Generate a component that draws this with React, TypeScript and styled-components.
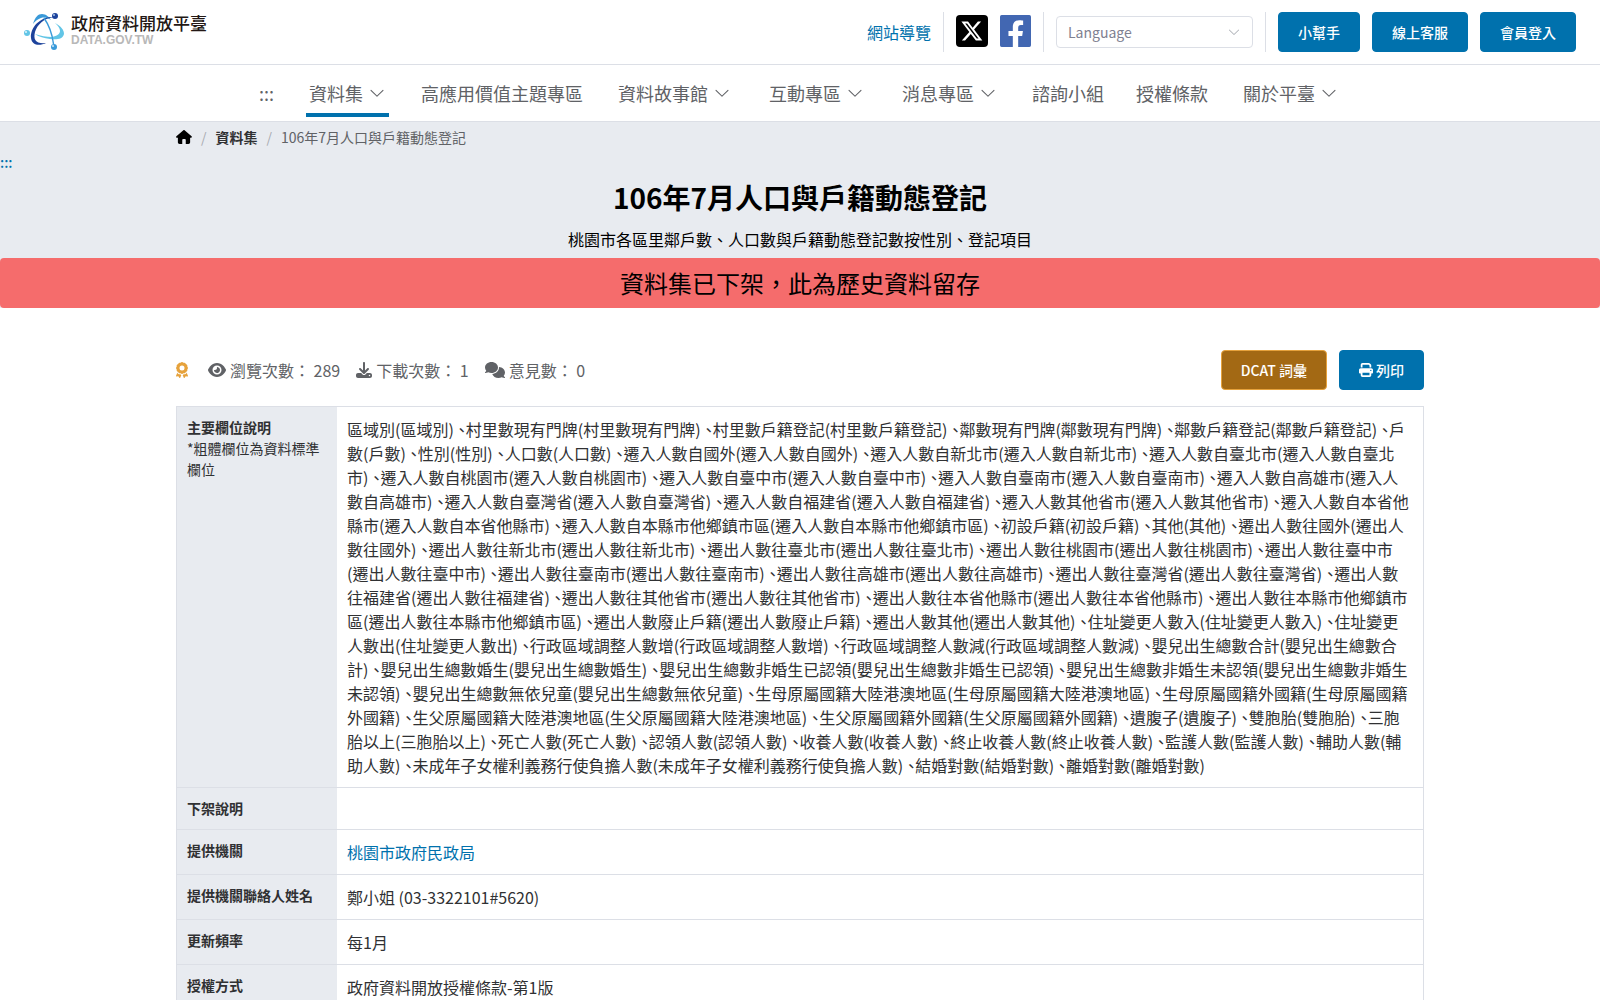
import React from "react";
import styled, { createGlobalStyle } from "styled-components";
import { FaAward, FaComments, FaDownload, FaEye, FaPrint } from "react-icons/fa6";

const color = {
  primary: "#0071ad",
  border: "#dcdfe6",
  panel: "#e8ebf0",
  text: "#303133",
  muted: "#606266",
  gold: "#a36914",
  amber: "#e6a23c",
  danger: "#f56c6c",
};

const GlobalStyle = createGlobalStyle`
  *, *::before, *::after { box-sizing: border-box; }
  body {
    margin: 0;
    background: #fff;
    color: ${color.text};
    font-family: "Noto Sans CJK TC", sans-serif;
    font-size: 16px;
    line-height: 24px;
  }
  a { color: ${color.primary}; text-decoration: none; }
  button, select { font-family: inherit; }
`;

const TopBar = styled.header`
  display: flex;
  align-items: center;
  justify-content: space-between;
  padding: 12px 24px;
  border-bottom: 1px solid ${color.border};
`;

const Brand = styled.a`
  display: flex;
  align-items: center;
  gap: 7px;
`;

const BrandText = styled.span`
  display: flex;
  flex-direction: column;
  padding-bottom: 4px;
`;

const BrandName = styled.span`
  color: #231815;
  font-size: 17px;
  font-weight: 500;
  line-height: 20px;
`;

const BrandDomain = styled.span`
  color: #b8b8b8;
  font-family: "Liberation Sans", sans-serif;
  font-size: 12px;
  font-weight: 700;
  line-height: 14px;
`;

const Tools = styled.div`
  display: flex;
  align-items: center;
  gap: 12px;
`;

const Divider = styled.span`
  width: 1px;
  height: 40px;
  background: ${color.border};
`;

const IconLink = styled.a`
  display: flex;
  padding-bottom: 2px;
`;

const SelectBox = styled.label`
  position: relative;
  display: flex;
  align-items: center;
`;

const Select = styled.select`
  appearance: none;
  width: 197px;
  height: 32px;
  padding: 0 32px 0 11px;
  border: 1px solid ${color.border};
  border-radius: 4px;
  background: #fff;
  color: #7f8191;
  font-size: 14px;
`;

const SelectArrow = styled.span`
  position: absolute;
  right: 12px;
  display: flex;
  color: #a8abb2;
  pointer-events: none;
`;

const Button = styled.button<{ $tone?: "gold" }>`
  display: inline-flex;
  align-items: center;
  gap: 3px;
  height: 40px;
  padding: 0 19px;
  border: 1px solid ${(p) => (p.$tone === "gold" ? color.amber : color.primary)};
  border-radius: 4px;
  background: ${(p) => (p.$tone === "gold" ? color.gold : color.primary)};
  color: #fff;
  font-size: 14px;
  font-weight: 500;
  white-space: nowrap;
`;

const Nav = styled.nav`
  display: flex;
  justify-content: center;
  gap: 32px;
  padding: 15px 0 4px;
  border-bottom: 1px solid ${color.border};
  font-size: 18px;
  line-height: 26px;
`;

const NavLink = styled.a<{ $menu?: boolean; $active?: boolean }>`
  display: flex;
  align-items: center;
  gap: 5px;
  padding: 0 ${(p) => (p.$menu ? "3px" : "0")} 7px;
  border-bottom: 4px solid ${(p) => (p.$active ? color.primary : "transparent")};
  color: ${color.muted};
`;

const Hero = styled.section`
  background: ${color.panel};
`;

const Container = styled.div`
  width: 78%;
  margin: 0 auto;
`;

const Breadcrumb = styled.div`
  display: flex;
  align-items: center;
  gap: 9px;
  height: 30px;
  color: ${color.muted};
  font-size: 14px;
`;

const HomeLink = styled.a`
  display: flex;
  color: #000;
`;

const CrumbLink = styled.a`
  color: ${color.text};
  font-weight: 700;
`;

const Slash = styled.span`
  color: #a8abb2;
`;

const Anchor = styled.a`
  display: block;
  font-size: 14px;
  font-weight: 500;
  line-height: 20px;
`;

const Title = styled.h1`
  margin: 0;
  padding-top: 3px;
  color: #000;
  font-size: 28px;
  font-weight: 700;
  line-height: 44px;
  text-align: center;
`;

const Summary = styled.p`
  margin: 0;
  padding: 8px 0 7px;
  color: #000;
  text-align: center;
`;

const Alert = styled.div`
  padding: 8px 16px;
  border-radius: 4px;
  background: ${color.danger};
  color: #000;
  font-size: 24px;
  line-height: 34px;
  text-align: center;
`;

const Meta = styled.div`
  display: flex;
  align-items: center;
  justify-content: space-between;
  padding: 42px 0 16px;
  color: ${color.muted};
`;

const Stats = styled.div`
  display: flex;
  align-items: center;
  gap: 16px;
`;

const Badge = styled.span`
  display: flex;
  margin-right: 4px;
  color: ${color.amber};

  svg {
    width: 12px;
    height: 16px;
  }
`;

const Stat = styled.span`
  display: flex;
  align-items: center;
  gap: 4px;
`;

const Actions = styled.div`
  display: flex;
  gap: 12px;
`;

const Table = styled.table`
  width: 100%;
  border: 1px solid ${color.border};
  border-spacing: 0;
  table-layout: fixed;

  tr + tr > * { border-top: 1px solid ${color.border}; }
`;

const Head = styled.th`
  width: 160px;
  padding: 10px;
  background: ${color.panel};
  font-size: 14px;
  line-height: 21px;
  text-align: left;
  vertical-align: top;
`;

const HeadNote = styled.div`
  font-weight: 400;
`;

const Cell = styled.td`
  padding: 10px;
  font-feature-settings: "halt";
  vertical-align: top;
`;

const ArrowDown = ({ size }: { size: number }) => (
  <svg width={size} height={size} viewBox="0 0 1024 1024" fill="currentColor" aria-hidden="true">
    <path d="M831.872 340.864 512 652.672 192.128 340.864a30.592 30.592 0 0 0-42.752 0 29.12 29.12 0 0 0 0 41.6L489.664 714.24a32 32 0 0 0 44.672 0l340.288-331.712a29.12 29.12 0 0 0 0-41.728 30.592 30.592 0 0 0-42.752 0z" />
  </svg>
);

const Logo = () => (
  <svg width="40" height="40" viewBox="0 0 40 40" aria-hidden="true">
    <path d="M9 12C11 5 14 2 18 2c4 0 7 3 9 6-3-2-6-3-10-2-3 1-6 3-8 6z" fill="#3a9ad9" />
    <path d="M31 11c6 3 9 7 9 11-1 5-7 6-14 5-6-1-11-2-15-5 6 2 11 3 17 3 5-1 8-3 8-6 0-3-2-5-5-8z" fill="#62c5e6" />
    <path d="M30 5C20 6 13 13 11 20c-2 8 1 12 11 11-6 3-14 3-15-5C6 15 17 4 30 5z" fill="#1c429b" />
    <path d="M20 6c5 7 8 14 9.500 26" fill="none" stroke="#3a9ad9" strokeWidth="1.4" />
    <circle cx="31" cy="4" r="3" fill="#1c429b" />
    <circle cx="30" cy="3" r="1" fill="#a9c4ea" />
    <circle cx="3" cy="21" r="3" fill="#62c5e6" />
    <circle cx="2" cy="20" r="1" fill="#e3f6fc" />
    <circle cx="30" cy="35" r="3" fill="#3a9ad9" />
    <circle cx="29" cy="34" r="1" fill="#cfe8f8" />
  </svg>
);

const XLogo = () => (
  <svg width="32" height="32" viewBox="0 0 32 32" aria-hidden="true">
    <rect width="32" height="32" rx="4" fill="#000" />
    <path
      transform="translate(4.2 4.4) scale(.97)"
      fill="#fff"
      d="M18.244 2.25h3.308l-7.227 8.26 8.502 11.24H16.17l-5.214-6.817L4.99 21.75H1.68l7.73-8.835L1.254 2.25H8.08l4.713 6.231zm-1.161 17.52h1.833L7.084 4.126H5.117z"
    />
  </svg>
);

const FacebookLogo = () => (
  <svg width="31" height="32" viewBox="0 32 448 448" preserveAspectRatio="none" aria-hidden="true">
    <path
      fill="#4267b2"
      d="M424 32H24A24 24 0 0 0 0 56v400a24 24 0 0 0 24 24h161.25V327.69h-63V256h63v-54.64c0-62.15 37-96.48 93.67-96.48 27.14 0 55.52 4.84 55.52 4.84v61h-31.27c-30.81 0-40.42 19.12-40.42 38.73V256h68.78l-11 71.69h-57.78V480H424a24 24 0 0 0 24-24V56a24 24 0 0 0-24-24z"
    />
  </svg>
);

const HomeIcon = () => (
  <svg width="16" height="14" viewBox="0 0 576 512" aria-hidden="true">
    <path d="M575.8 255.5c0 18-15 32.1-32 32.1h-32l.7 160.2c0 35-28 64.2-64 64.2H352V360c0-18-14-32-32-32h-64c-18 0-32 14-32 32v152h-96c-36 0-64-29-64-64V287.6H32c-18 0-32-14-32-32.1 0-9 3-17 10-24L266.4 8c7-7 15-8 22-8s15 2 21 7l255.400 224.500c8 7 12 15 11 24z" />
  </svg>
);

type NavItem = { label: string; menu?: boolean; active?: boolean };

const navItems: NavItem[] = [
  { label: ":::" },
  { label: "資料集", menu: true, active: true },
  { label: "高應用價值主題專區" },
  { label: "資料故事館", menu: true },
  { label: "互動專區", menu: true },
  { label: "消息專區", menu: true },
  { label: "諮詢小組" },
  { label: "授權條款" },
  { label: "關於平臺", menu: true },
];

const fields = [
  "區域別", "村里數現有門牌", "村里數戶籍登記", "鄰數現有門牌", "鄰數戶籍登記", "戶數", "性別", "人口數",
  "遷入人數自國外", "遷入人數自新北市", "遷入人數自臺北市", "遷入人數自桃園市", "遷入人數自臺中市",
  "遷入人數自臺南市", "遷入人數自高雄市", "遷入人數自臺灣省", "遷入人數自福建省", "遷入人數其他省市",
  "遷入人數自本省他縣市", "遷入人數自本縣市他鄉鎮市區", "初設戶籍", "其他",
  "遷出人數往國外", "遷出人數往新北市", "遷出人數往臺北市", "遷出人數往桃園市", "遷出人數往臺中市",
  "遷出人數往臺南市", "遷出人數往高雄市", "遷出人數往臺灣省", "遷出人數往福建省", "遷出人數往其他省市",
  "遷出人數往本省他縣市", "遷出人數往本縣市他鄉鎮市區", "遷出人數廢止戶籍", "遷出人數其他",
  "住址變更人數入", "住址變更人數出", "行政區域調整人數增", "行政區域調整人數減",
  "嬰兒出生總數合計", "嬰兒出生總數婚生", "嬰兒出生總數非婚生已認領", "嬰兒出生總數非婚生未認領",
  "嬰兒出生總數無依兒童", "生母原屬國籍大陸港澳地區", "生母原屬國籍外國籍",
  "生父原屬國籍大陸港澳地區", "生父原屬國籍外國籍", "遺腹子", "雙胞胎", "三胞胎以上",
  "死亡人數", "認領人數", "收養人數", "終止收養人數", "監護人數", "輔助人數",
  "未成年子女權利義務行使負擔人數", "結婚對數", "離婚對數",
];

// A quarter-em space keeps the half-width comma clear of the closing bracket.
const fieldList = fields.map((field) => `${field}(${field})`).join("\u2005、");

const rows: { head: string; note?: string; body: React.ReactNode }[] = [
  { head: "主要欄位說明", note: "*粗體欄位為資料標準欄位", body: fieldList },
  { head: "下架說明", body: "" },
  { head: "提供機關", body: <a href="#agency">桃園市政府民政局</a> },
  { head: "提供機關聯絡人姓名", body: "鄭小姐 (03-3322101#5620)" },
  { head: "更新頻率", body: "每1月" },
  { head: "授權方式", body: "政府資料開放授權條款-第1版" },
];

export default function App() {
  return (
    <>
      <GlobalStyle />
      <TopBar>
        <Brand href="#home">
          <Logo />
          <BrandText>
            <BrandName>政府資料開放平臺</BrandName>
            <BrandDomain>DATA.GOV.TW</BrandDomain>
          </BrandText>
        </Brand>
        <Tools>
          <a href="#sitemap">網站導覽</a>
          <Divider />
          <IconLink href="#x" aria-label="X"><XLogo /></IconLink>
          <IconLink href="#facebook" aria-label="Facebook"><FacebookLogo /></IconLink>
          <Divider />
          <SelectBox>
            <Select aria-label="Language" defaultValue="">
              <option value="">Language</option>
            </Select>
            <SelectArrow><ArrowDown size={14} /></SelectArrow>
          </SelectBox>
          <Divider />
          <Button type="button">小幫手</Button>
          <Button type="button">線上客服</Button>
          <Button type="button">會員登入</Button>
        </Tools>
      </TopBar>
      <Nav>
        {navItems.map((item) => (
          <NavLink key={item.label} href="#nav" $menu={item.menu} $active={item.active}>
            {item.label}
            {item.menu && <ArrowDown size={18} />}
          </NavLink>
        ))}
      </Nav>
      <main>
        <Hero>
          <Container>
            <Breadcrumb>
              <HomeLink href="#home" aria-label="首頁"><HomeIcon /></HomeLink>
              <Slash>/</Slash>
              <CrumbLink href="#datasets">資料集</CrumbLink>
              <Slash>/</Slash>
              <span>106年7月人口與戶籍動態登記</span>
            </Breadcrumb>
          </Container>
          <Anchor href="#content">:::</Anchor>
          <Title>106年7月人口與戶籍動態登記</Title>
          <Summary>桃園市各區里鄰戶數、人口數與戶籍動態登記數按性別、登記項目</Summary>
          <Alert role="alert">資料集已下架，此為歷史資料留存</Alert>
        </Hero>
        <Container>
          <Meta>
            <Stats>
              <Badge><FaAward /></Badge>
              <Stat><FaEye size={18} />瀏覽次數： 289</Stat>
              <Stat><FaDownload />下載次數： 1</Stat>
              <Stat><FaComments size={20} />意見數： 0</Stat>
            </Stats>
            <Actions>
              <Button type="button" $tone="gold">DCAT 詞彙</Button>
              <Button type="button"><FaPrint size={14} />列印</Button>
            </Actions>
          </Meta>
          <Table>
            <tbody>
              {rows.map((row) => (
                <tr key={row.head}>
                  <Head scope="row">
                    {row.head}
                    {row.note && <HeadNote>{row.note}</HeadNote>}
                  </Head>
                  <Cell>{row.body}</Cell>
                </tr>
              ))}
            </tbody>
          </Table>
        </Container>
      </main>
    </>
  );
}
